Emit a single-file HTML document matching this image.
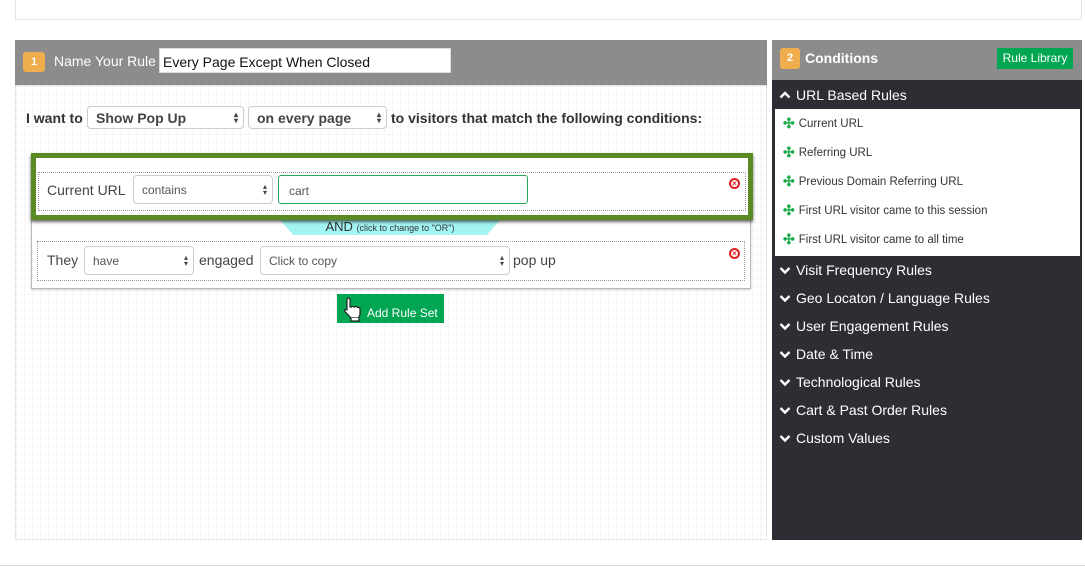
<!DOCTYPE html>
<html><head><style>
*{box-sizing:border-box;margin:0;padding:0}
body{width:1085px;height:568px;background:#fff;font-family:"Liberation Sans",sans-serif;position:relative;overflow:hidden}
.a{position:absolute}
.sel{position:absolute;background:#fff;border:1px solid #ccc;border-radius:4px;color:#555;font-size:12px;padding-left:8px;display:flex;align-items:center}
.sel:after{content:"\25B4\A\25BE";white-space:pre;position:absolute;right:5px;top:50%;transform:translateY(-50%);font-size:8px;line-height:6px;color:#444}
.grid{background-color:#fff;background-image:linear-gradient(#f6f6f6 1px,transparent 1px),linear-gradient(90deg,#f6f6f6 1px,transparent 1px);background-size:8px 8px}
.rl{position:absolute;left:775px;width:305px;color:#333;font-size:11.5px;height:29px;display:flex;align-items:center;padding-left:8px}
.rl b{color:#1aaa4a;font-size:14px;margin-right:4px;font-weight:bold}
.cat{position:absolute;left:779px;color:#fff;font-size:14px;display:flex;align-items:center}
.cat svg{margin-right:5px}
</style></head><body>
<div class="a" style="left:15px;top:-1px;width:1067px;height:21px;border:1px solid #e3e3e3"></div>
<div class="a" style="left:15px;top:40px;width:752px;height:45px;background:#8c8c8c"></div>
<div class="a" style="left:23px;top:52px;width:22px;height:20px;background:#f0ad4e;border-radius:3px;color:#fff;font-size:11px;font-weight:bold;text-align:center;line-height:20px">1</div>
<div class="a" style="left:54px;top:53px;color:#fff;font-size:14px">Name Your Rule</div>
<div class="a" style="left:159px;top:48px;width:292px;height:25px;background:#fff;border:1px solid #ddd;font-size:14px;color:#111;padding:5px 3px">Every Page Except When Closed</div>
<div class="a grid" style="left:15px;top:85px;width:752px;height:455px;border:1px dotted #ccc"></div>
<div class="a" style="left:26px;top:110px;font-size:14px;font-weight:bold;color:#333">I want to</div>
<div class="sel" style="left:87px;top:106px;width:157px;height:23px;font-size:14px;font-weight:bold;color:#444">Show Pop Up</div>
<div class="sel" style="left:248px;top:106px;width:139px;height:23px;font-size:14px;font-weight:bold;color:#444">on every page</div>
<div class="a" style="left:391px;top:110px;font-size:14px;font-weight:bold;color:#333">to visitors that match the following conditions:</div>
<div class="a" style="left:31px;top:160px;width:720px;height:129px;background:#fff;border:1px solid #bbb;box-shadow:0 1px 2px rgba(0,0,0,.2)"></div>
<div class="a" style="left:280px;top:220px;width:220px;height:15px;background:#a3f5f3;clip-path:polygon(0 0,100% 0,94% 100%,6% 100%);text-align:center;font-size:13px;color:#333;line-height:13px">AND <span style="font-size:9px">(click to change to "OR")</span></div>
<div class="a" style="left:31px;top:153px;width:722px;height:67px;border:5px solid #5a8a24;box-shadow:0 2px 3px rgba(0,0,0,.6);background:#fff"></div>
<div class="a" style="left:38px;top:172px;width:708px;height:39px;border:1px dotted #999"></div>
<div class="a" style="left:47px;top:182px;font-size:14px;color:#444">Current URL</div>
<div class="sel" style="left:133px;top:175px;width:140px;height:29px">contains</div>
<div class="a" style="left:278px;top:175px;width:250px;height:29px;border:1px solid #2aa55a;border-radius:3px;font-size:12px;color:#555;padding:8px 10px">cart</div>
<div class="a" style="left:729px;top:178px;width:11px;height:11px;border-radius:50%;border:2px solid #e02020;color:#e02020;font-size:8px;line-height:7px;text-align:center;font-weight:bold">×</div>
<div class="a" style="left:37px;top:241px;width:708px;height:40px;border:1px dotted #999"></div>
<div class="a" style="left:47px;top:252px;font-size:14px;color:#444">They</div>
<div class="sel" style="left:84px;top:246px;width:110px;height:29px">have</div>
<div class="a" style="left:199px;top:252px;font-size:14px;color:#444">engaged</div>
<div class="sel" style="left:260px;top:246px;width:250px;height:29px">Click to copy</div>
<div class="a" style="left:513px;top:252px;font-size:14px;color:#444">pop up</div>
<div class="a" style="left:729px;top:248px;width:11px;height:11px;border-radius:50%;border:2px solid #e02020;color:#e02020;font-size:8px;line-height:7px;text-align:center;font-weight:bold">×</div>
<div class="a" style="left:337px;top:294px;width:107px;height:29px;background:#00a651;color:#fff;font-size:12px;padding:12px 0 0 30px">Add Rule Set</div>
<svg class="a" style="left:342px;top:296px" width="24" height="26" viewBox="0 0 24 26"><path d="M5 3.5a1.5 1.5 0 0 1 3 0V11h1.5a1.5 1.5 0 0 1 2.5 0h1a1.5 1.5 0 0 1 2.5 0.5h0.5a1.5 1.5 0 0 1 2 1.5V18c0 2-1 3-2 4H9L3 15.5c-1-1.2 0.5-2.8 1.8-1.8L5 14z" fill="#fff" stroke="#222" stroke-width="1.2" stroke-linejoin="round"/><path d="M9 22v3h8v-3" fill="#fff" stroke="#222" stroke-width="1.2"/></svg>
<div class="a" style="left:772px;top:40px;width:310px;height:40px;background:#8c8c8c"></div>
<div class="a" style="left:780px;top:48px;width:20px;height:21px;background:#f0ad4e;border-radius:3px;color:#fff;font-size:11px;font-weight:bold;text-align:center;line-height:21px">2</div>
<div class="a" style="left:805px;top:50px;color:#fff;font-size:14px;font-weight:bold">Conditions</div>
<div class="a" style="left:997px;top:48px;width:76px;height:21px;background:#00a651;color:#fff;font-size:12px;text-align:center;line-height:21px">Rule Library</div>
<div class="a" style="left:772px;top:80px;width:310px;height:460px;background:#2d2d33"></div>
<div class="a" style="left:775px;top:109px;width:305px;height:147px;background:#fff"></div>
<div class="cat" style="top:87px"><svg width="12" height="10" viewBox="0 0 12 10"><path d="M1.5 7.5L6 3l4.5 4.5" stroke="#fff" stroke-width="2.4" fill="none"/></svg>URL Based Rules</div>
<div class="rl" style="top:109px"><b>✣</b>Current URL</div>
<div class="rl" style="top:138px"><b>✣</b>Referring URL</div>
<div class="rl" style="top:167px"><b>✣</b>Previous Domain Referring URL</div>
<div class="rl" style="top:196px"><b>✣</b>First URL visitor came to this session</div>
<div class="rl" style="top:225px"><b>✣</b>First URL visitor came to all time</div>
<div class="cat" style="top:262px"><svg width="12" height="10" viewBox="0 0 12 10"><path d="M1.5 3L6 7.5 10.5 3" stroke="#fff" stroke-width="2.4" fill="none"/></svg>Visit Frequency Rules</div>
<div class="cat" style="top:290px"><svg width="12" height="10" viewBox="0 0 12 10"><path d="M1.5 3L6 7.5 10.5 3" stroke="#fff" stroke-width="2.4" fill="none"/></svg>Geo Locaton / Language Rules</div>
<div class="cat" style="top:318px"><svg width="12" height="10" viewBox="0 0 12 10"><path d="M1.5 3L6 7.5 10.5 3" stroke="#fff" stroke-width="2.4" fill="none"/></svg>User Engagement Rules</div>
<div class="cat" style="top:346px"><svg width="12" height="10" viewBox="0 0 12 10"><path d="M1.5 3L6 7.5 10.5 3" stroke="#fff" stroke-width="2.4" fill="none"/></svg>Date &amp; Time</div>
<div class="cat" style="top:374px"><svg width="12" height="10" viewBox="0 0 12 10"><path d="M1.5 3L6 7.5 10.5 3" stroke="#fff" stroke-width="2.4" fill="none"/></svg>Technological Rules</div>
<div class="cat" style="top:402px"><svg width="12" height="10" viewBox="0 0 12 10"><path d="M1.5 3L6 7.5 10.5 3" stroke="#fff" stroke-width="2.4" fill="none"/></svg>Cart &amp; Past Order Rules</div>
<div class="cat" style="top:430px"><svg width="12" height="10" viewBox="0 0 12 10"><path d="M1.5 3L6 7.5 10.5 3" stroke="#fff" stroke-width="2.4" fill="none"/></svg>Custom Values</div>
<div class="a" style="left:0;top:565px;width:1085px;height:1px;background:#ddd"></div>
</body></html>
